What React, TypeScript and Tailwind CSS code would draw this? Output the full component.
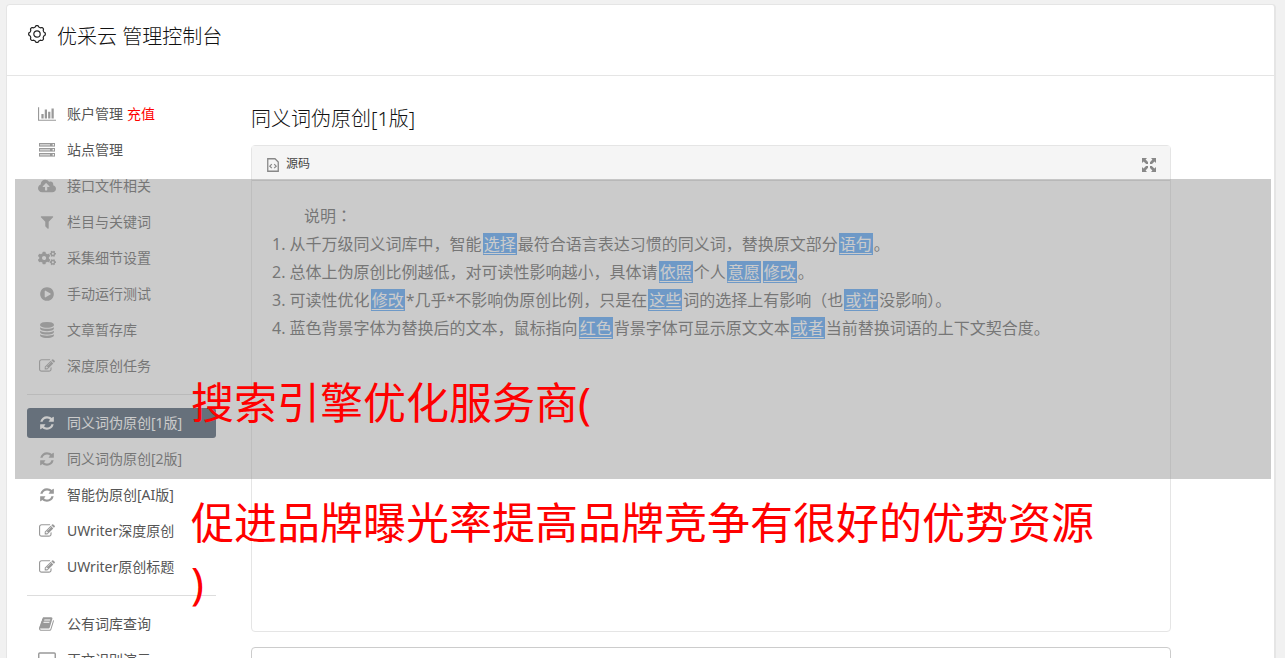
import React from "react";
import { FaCloudUploadAlt, FaCogs } from "react-icons/fa";

type IconProps = { className?: string };

function glyph(d: string, width = 1792) {
  return function Glyph({ className }: IconProps) {
    return (
      <svg viewBox={`0 0 ${width} 1792`} fill="currentColor" className={className} aria-hidden="true">
        <path d={d} />
      </svg>
    );
  };
}

const BarChart = glyph("M640 896v512h-256v-512h256zm384-512v1024h-256v-1024h256zm1024 1152v128h-2048v-1536h128v1408h1920zm-640-896v768h-256v-768h256zm384-384v1152h-256v-1152h256z", 2048);
const Filter = glyph("M1595 295q17 41-14 70l-493 493v742q0 42-39 59-13 5-25 5-27 0-45-19l-256-256q-19-19-19-45v-486l-493-493q-31-29-14-70 17-39 59-39h1280q42 0 59 39z");
const PlayCircle = glyph("M896 128q209 0 385.5 103t279.5 279.5 103 385.5-103 385.5-279.5 279.5-385.5 103-385.5-103-279.5-279.5-103-385.5 103-385.5 279.5-279.5 385.5-103zm384 823q32-18 32-55t-32-55l-544-320q-31-19-64-1-32 19-32 55v640q0 37 32 56 16 8 32 8 17 0 32-9z");
const Database = glyph("M896 768q237 0 443-43t325-127v170q0 69-103 128t-280 93.5-385 34.5-385-34.5-280-93.5-103-128v-170q119 84 325 127t443 43zm0 768q237 0 443-43t325-127v170q0 69-103 128t-280 93.5-385 34.5-385-34.5-280-93.5-103-128v-170q119 84 325 127t443 43zm0-384q237 0 443-43t325-127v170q0 69-103 128t-280 93.5-385 34.5-385-34.5-280-93.5-103-128v-170q119 84 325 127t443 43zm0-1152q208 0 385 34.5t280 93.5 103 128v128q0 69-103 128t-280 93.5-385 34.5-385-34.5-280-93.5-103-128v-128q0-69 103-128t280-93.5 385-34.5z");
const Edit = glyph("M888 1184l116-116-152-152-116 116v56h96v96h56zm440-720q-16-16-33 1l-350 350q-17 17-1 33t33-1l350-350q17-17 1-33zm80 594v190q0 119-84.5 203.5t-203.5 84.5h-832q-119 0-203.5-84.5t-84.5-203.5v-832q0-119 84.5-203.5t203.5-84.5h832q63 0 117 25 15 7 18 23 3 17-9 29l-49 49q-14 14-32 8-23-6-45-6h-832q-66 0-113 47t-47 113v832q0 66 47 113t113 47h832q66 0 113-47t47-113v-126q0-13 9-22l64-64q15-15 35-7t20 29zm-96-738l288 288-672 672h-288v-288zm444 132l-92 92-288-288 92-92q28-28 68-28t68 28l152 152q28 28 28 68t-28 68z");
const Refresh = glyph("M1639 1056q0 5-1 7-64 268-268 434.5t-478 166.5q-146 0-282.5-55t-243.5-157l-129 129q-19 19-45 19t-45-19-19-45v-448q0-26 19-45t45-19h448q26 0 45 19t19 45-19 45l-137 137q71 66 161 102t187 36q134 0 250-65t186-179q11-17 53-117 8-23 30-23h192q13 0 22.5 9.5t9.5 22.5zm25-800v448q0 26-19 45t-45 19h-448q-26 0-45-19t-19-45 19-45l138-138q-148-137-349-137-134 0-250 65t-186 179q-11 17-53 117-8 23-30 23h-199q-13 0-22.5-9.5t-9.5-22.5v-7q65-268 270-434.5t480-166.5q146 0 284 55.5t245 156.5l130-129q19-19 45-19t45 19 19 45z");
const Book = glyph("M1639 478q40 57 18 129l-275 906q-19 64-76.5 107.5t-122.5 43.5h-923q-77 0-148.5-53.5t-99.5-131.5q-24-67-2-127 0-4 3-27t4-37q1-8-3-21.5t-3-19.5q2-11 8-21t16.5-23.5 16.5-23.5q23-38 45-91.5t30-91.5q3-10 .5-30t-.5-28q3-11 17-28t17-23q21-36 42-92t25-90q1-9-2.5-32t.5-28q4-13 22-30.5t22-22.5q19-26 42.5-84.5t27.5-96.5q1-8-3-25.5t-2-26.5q2-8 9-18t18-23 17-21q8-12 16.5-30.5t15-35 16-36 19.5-32 26.5-23.5 36-11.5 47.5 5.5l-1 3q38-9 51-9h761q74 0 114 56t18 130l-274 906q-36 119-71.5 153.5t-128.5 34.5h-869q-27 0-38 15-11 16-1 43 24 70 144 70h923q29 0 56-15.5t35-41.5l300-987q7-22 5-57 38 15 59 43zm-1064 2q-4 13 2 22.5t20 9.5h608q13 0 25.5-9.5t16.5-22.5l21-64q4-13-2-22.5t-20-9.5h-608q-13 0-25.5 9.5t-16.5 22.5zm-83 256q-4 13 2 22.5t20 9.5h608q13 0 25.5-9.5t16.5-22.5l21-64q4-13-2-22.5t-20-9.5h-608q-13 0-25.5 9.5t-16.5 22.5z");

function Server({ className }: IconProps) {
  return (
    <svg viewBox="0 0 18 16" className={className} aria-hidden="true">
      {[1, 6, 11].map((y) => (
        <g key={y}>
          <rect x="1" y={y} width="16" height="3.6" fill="currentColor" />
          <rect x="2" y={y + 1.1} width="10" height="1.4" fill="#d8d8d8" />
          <rect x="14.6" y={y + 1.1} width="1.4" height="1.4" fill="#fff" />
        </g>
      ))}
    </svg>
  );
}

function Desktop({ className }: IconProps) {
  return (
    <svg viewBox="0 0 18 16" fill="none" stroke="currentColor" className={className} aria-hidden="true">
      <rect x=".75" y="1" width="16.5" height="11" rx="1" strokeWidth="1.4" />
      <path d="M5 15h8M9 12v3" strokeWidth="1.4" />
    </svg>
  );
}

function Gear({ className }: IconProps) {
  const points = Array.from({ length: 96 }, (_, i) => {
    const a = (i / 96) * Math.PI * 2;
    const r = 7.7 + 0.65 * Math.tanh(2 * Math.cos(a * 8));
    return `${(9 + r * Math.cos(a)).toFixed(2)},${(9 + r * Math.sin(a)).toFixed(2)}`;
  }).join(" ");
  return (
    <svg viewBox="0 0 18 18" fill="none" stroke="currentColor" strokeWidth="1.2" className={className} aria-hidden="true">
      <polygon points={points} />
      <circle cx="9" cy="9" r="3.2" />
    </svg>
  );
}

function SourceIcon({ className }: IconProps) {
  return (
    <svg viewBox="0 0 12 14" fill="none" stroke="currentColor" className={className} aria-hidden="true">
      <path d="M.75.75H8l3.25 3.25v9.25H.75z" strokeWidth="1.3" />
      <path d="M4.8 6.2 2.8 8.2l2 2M7.2 6.2l2 2-2 2" strokeWidth="1.2" />
    </svg>
  );
}

function Maximize({ className }: IconProps) {
  return (
    <svg viewBox="0 0 14 14" fill="currentColor" className={className} aria-hidden="true">
      {[0, 90, 180, 270].map((r) => (
        <path key={r} transform={`rotate(${r} 7 7)`} d="M0 0h5L3.6 1.5 6 4v2H4.2L1.6 3.6 0 5z" />
      ))}
    </svg>
  );
}

type Item = { label: string; icon: React.ComponentType<IconProps>; badge?: string; active?: boolean };

const groups: Item[][] = [
  [
    { label: "账户管理", icon: BarChart, badge: "充值" },
    { label: "站点管理", icon: Server },
    { label: "接口文件相关", icon: FaCloudUploadAlt },
    { label: "栏目与关键词", icon: Filter },
    { label: "采集细节设置", icon: FaCogs },
    { label: "手动运行测试", icon: PlayCircle },
    { label: "文章暂存库", icon: Database },
    { label: "深度原创任务", icon: Edit },
  ],
  [
    { label: "同义词伪原创[1版]", icon: Refresh, active: true },
    { label: "同义词伪原创[2版]", icon: Refresh },
    { label: "智能伪原创[AI版]", icon: Refresh },
    { label: "UWriter深度原创", icon: Edit },
    { label: "UWriter原创标题", icon: Edit },
  ],
  [
    { label: "公有词库查询", icon: Book },
    { label: "正文识别演示", icon: Desktop },
  ],
];

function Mark({ children }: { children: string }) {
  return <span className="mx-px bg-[#459bf7] px-px text-white underline underline-offset-3">{children}</span>;
}

function NavItem({ item }: { item: Item }) {
  const Icon = item.icon;
  return (
    <li>
      <a
        href="#"
        className={
          item.active
            ? "flex h-[30px] items-center rounded-[3px] bg-[#34495e] text-white"
            : "flex h-[30px] items-center text-[#555]"
        }
      >
        <span className={item.active ? "flex w-10 justify-center" : "flex w-10 justify-center text-[#999]"}>
          <Icon className="h-4 w-[18px]" />
        </span>
        <span className="pb-0.5">{item.label}</span>
        {item.badge && <span className="ml-1 pb-0.5 text-[#ff0000]">{item.badge}</span>}
      </a>
    </li>
  );
}

export default function App() {
  return (
    <div className="relative h-screen overflow-hidden bg-[#f1f1f1] pt-1 pr-[9px] pl-1.5 font-['Noto_Sans','Noto_Sans_CJK_SC',sans-serif]">
      <div className="min-h-screen rounded-t-[4px] border border-r-2 border-[#e5e5e5] bg-white">
        <header className="flex h-[71px] items-start border-b border-[#e5e5e5] pt-[17px] pl-[21px]">
          <Gear className="mt-[3px] h-[18px] w-[18px] text-[#222]" />
          <h1 className="ml-[11px] text-[20px] leading-[30px] font-light text-[#111]">优采云 管理控制台</h1>
        </header>
        <div className="flex pr-[103px] pl-5">
          <nav className="mt-[23px] w-[189px] shrink-0 text-[14px]">
            {groups.map((group, i) => (
              <ul
                key={i}
                className={
                  i === 0 ? "flex flex-col gap-1.5" : "mt-[13px] flex flex-col gap-1.5 border-t border-[#ddd] pt-[13px]"
                }
              >
                {group.map((item) => (
                  <NavItem key={item.label} item={item} />
                ))}
              </ul>
            ))}
          </nav>
          <main className="ml-[35px] min-w-0 flex-1 pt-7">
            <h2 className="text-[20px] leading-[30px] font-light text-[#111]">同义词伪原创[1版]</h2>
            <section className="mt-[11px] rounded-[4px] border border-[#e5e5e5]">
              <div className="flex h-[35px] items-center justify-between border-b border-[#d8d8d8] bg-[#f5f5f5] pt-0.5 pr-[14px] pl-[15px] text-[12px]">
                <button type="button" className="flex items-center gap-[7px] text-[#444]">
                  <SourceIcon className="mt-0.5 h-[14px] w-3 text-[#888]" />
                  源码
                </button>
                <button type="button" aria-label="最大化">
                  <Maximize className="mt-0.5 h-[14px] w-[14px] text-[#888]" />
                </button>
              </div>
              <div className="min-h-[450px] pt-5 pl-5 text-[16px] leading-[28px] whitespace-nowrap text-[#555]">
                <p className="pl-8">说明<span className="font-['Noto_Sans_CJK_TC']">：</span></p>
                <ol className="list-inside list-decimal">
                  <li>从千万级同义词库中，智能<Mark>选择</Mark>最符合语言表达习惯的同义词，替换原文部分<Mark>语句</Mark>。</li>
                  <li>总体上伪原创比例越低，对可读性影响越小，具体请<Mark>依照</Mark>个人<Mark>意愿</Mark><Mark>修改</Mark>。</li>
                  <li>可读性优化<Mark>修改</Mark>*几乎*不影响伪原创比例，只是在<Mark>这些</Mark>词的选择上有影响（也<Mark>或许</Mark>没影响）。</li>
                  <li>蓝色背景字体为替换后的文本，鼠标指向<Mark>红色</Mark>背景字体可显示原文文本<Mark>或者</Mark>当前替换词语的上下文契合度。</li>
                </ol>
              </div>
            </section>
            <section className="mt-[15px] h-20 rounded-[4px] border border-[#ccc]" />
          </main>
        </div>
      </div>
      <div className="absolute top-[179px] right-[14px] left-[15px] h-[300px] bg-[#979797]/50" />
      <p className="absolute top-[373px] left-[191px] w-[920px] text-[43px] leading-[60px] text-[#ff0000]">
        搜索引擎优化服务商(
        <br />
        <br />
        促进品牌曝光率提高品牌竞争有很好的优势资源
        <br />)
      </p>
    </div>
  );
}
